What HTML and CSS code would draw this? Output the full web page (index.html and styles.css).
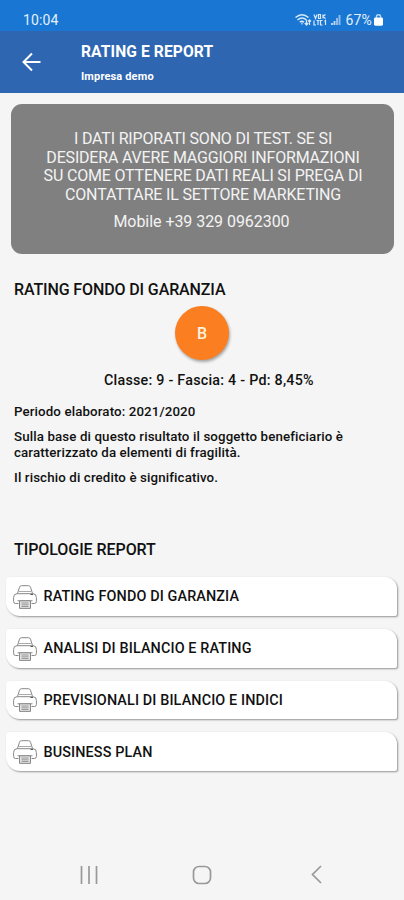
FILE: index.html
```
<!DOCTYPE html>
<html lang="it">
<head>
<meta charset="utf-8">
<title>Rating e Report</title>
<link rel="stylesheet" href="styles.css">
</head>
<body>
<svg class="defs" width="0" height="0" aria-hidden="true">
  <symbol id="printer" viewBox="0 0 24 24">
    <path d="M4.500 8.500 6.500 2.200Q7 .7 8.500.7h7Q17 .7 17.500 2.200l2 6.300" fill="none" stroke="#888"/>
    <path d="M6 6.500h12" stroke="#aaa" fill="none"/>
    <path d="M5.500 18.500H2.500Q.6 18.500.6 16.500v-4Q.6 8.700 4 8.700h16q3.400 0 3.400 3.800v4q0 2-1.900 2h-3" fill="none" stroke="#888"/>
    <path d="M17.500 9.500h2.500" stroke="#555"/>
    <path d="M4.500 15.800h15" stroke="#888"/>
    <path d="M6.500 15.800h11v7.600h-11z" fill="#e2e2e2" stroke="#888"/>
    <path d="M8.500 18h7M8.500 19.800h7M8.500 21.500h7" stroke="#888" stroke-width=".8"/>
  </symbol>
</svg>
<div class="status">
  <span class="time">10:04</span>
  <svg class="indicators" width="48" height="14" viewBox="0 0 48 14" fill="none" stroke="#d8e9fb" aria-hidden="true">
    <path d="M.5 4.500Q7-1 13.500 4.500M2.500 7Q7 3 11.500 7M4.800 9.200Q7 7.400 9 9.200" stroke-width="1.500"/>
    <path d="M7 9.500v2M11.500 7v5M9.800 10l1.700 2 1.700-2M14.500 12V7M13 8.500l1.500-1.700L16 8.500" stroke-width="1.200"/>
    <path d="M19 1.500l1.500 4 1.500-4M23.500 1.500h2v4h-2zM28 1.500v4M28 3.500l2.500-2M28 3.500l2.500 2" stroke-width="1.200"/>
    <path d="M19 7.500v4.500h2M21.500 7.500h3M23 7.500v4.500M27.500 7.500h-2V12h2M29.500 8.500l1-1V12" stroke-width="1.200"/>
    <path d="M37 12v-2M39.500 12V8" stroke-width="1.800" opacity=".9"/>
    <path d="M42 12V5M44.500 12V2" stroke-width="2" opacity=".6"/>
  </svg>
  <span class="percent">67%</span>
  <svg class="battery" width="9" height="12" viewBox="0 0 9 12" aria-hidden="true">
    <path d="M2.500 4V2.300Q2.500.8 4.500.8t2 1.500V4" fill="none" stroke="#b7d6f6" stroke-width="1.400"/>
    <rect y="3.500" width="9" height="8.200" rx="1.400" fill="#fff"/>
  </svg>
</div>
<header class="appbar">
  <svg class="back" width="20" height="20" viewBox="0 0 20 20" fill="none" stroke="#fff" stroke-width="2" aria-label="Indietro"><path d="M18.500 10H2M10 1.500 1.500 10l8.500 8.500"/></svg>
  <div class="titles">
    <h1>RATING E REPORT</h1>
    <p>Impresa demo</p>
  </div>
</header>
<main>
  <section class="notice">
    <p class="warning">I DATI RIPORATI SONO DI TEST. SE SI<br>DESIDERA AVERE MAGGIORI INFORMAZIONI<br>SU COME OTTENERE DATI REALI SI PREGA DI<br>CONTATTARE IL SETTORE MARKETING</p>
    <p class="mobile">Mobile +39 329 0962300</p>
  </section>
  <section class="rating">
    <h2>RATING FONDO DI GARANZIA</h2>
    <div class="grade">B</div>
    <p class="score">Classe: 9 - Fascia: 4 - Pd: 8,45%</p>
    <p class="detail">Periodo elaborato: 2021/2020</p>
    <p class="detail">Sulla base di questo risultato il soggetto beneficiario è<br>caratterizzato da elementi di fragilità.</p>
    <p class="detail">Il rischio di credito è significativo.</p>
  </section>
  <section class="reports">
    <h2 class="types">TIPOLOGIE REPORT</h2>
    <div class="list">
      <div class="report"><svg class="print"><use href="#printer"/></svg><span>RATING FONDO DI GARANZIA</span></div>
      <div class="report"><svg class="print"><use href="#printer"/></svg><span>ANALISI DI BILANCIO E RATING</span></div>
      <div class="report"><svg class="print"><use href="#printer"/></svg><span>PREVISIONALI DI BILANCIO E INDICI</span></div>
      <div class="report"><svg class="print"><use href="#printer"/></svg><span>BUSINESS PLAN</span></div>
    </div>
  </section>
</main>
<nav class="navbar">
  <svg width="18" height="18" viewBox="0 0 18 18" fill="none" stroke="#999" stroke-width="1.700"><path d="M1.500 0v18M9 0v18M16.500 0v18"/></svg>
  <svg class="home" width="20" height="20" viewBox="0 0 20 20" fill="none" stroke="#999" stroke-width="1.700"><rect x="1.500" y="1.500" width="17" height="17" rx="5.500"/></svg>
  <svg width="11" height="19" viewBox="0 0 11 19" fill="none" stroke="#999" stroke-width="1.700"><path d="M10 1 1.500 9.500 10 18"/></svg>
</nav>
</body>
</html>
```
FILE: styles.css
```
* { box-sizing: border-box; }
body {
  margin: 0;
  height: 900px;
  display: flex;
  flex-direction: column;
  overflow: hidden;
  background: #f5f5f5;
  color: #111;
  font-family: Roboto, "Liberation Sans", sans-serif;
}
h1, h2, p { margin: 0; white-space: nowrap; }
.defs { position: absolute; }
.status {
  height: 31px;
  flex: none;
  display: flex;
  align-items: center;
  padding: 9px 21px 0 23px;
  background: #1976d2;
  color: #e4f0fc;
  font-size: 14px;
}
.time { letter-spacing: .1px; }
.indicators { margin-left: auto; }
.percent { margin: 0 2px 0 2px; letter-spacing: .2px; }
.appbar {
  height: 62px;
  flex: none;
  display: flex;
  padding: 21px 0 0 22px;
  background: #2e66b1;
  color: #fff;
}
.titles { margin: -10px 0 0 39px; }
.appbar h1 { font-size: 15.600px; line-height: 20px; font-weight: 700; letter-spacing: .1px; }
.appbar p { margin-top: 7px; font-size: 11px; line-height: 16px; font-weight: 700; letter-spacing: .15px; }
.notice {
  height: 150px;
  margin: 11px 10px 0 11px;
  padding: 26px 0 0 1px;
  border-radius: 11px;
  background: #808080;
  color: #f3f3f3;
  text-align: center;
  font-size: 16px;
}
.warning { line-height: 18.500px; letter-spacing: -.18px; }
.mobile { margin-top: 9px; padding-right: 3px; line-height: 18px; letter-spacing: -.05px; }
.rating { height: 285px; padding: 26px 14px 0; font-weight: 500; }
h2 { font-size: 16px; line-height: 20px; font-weight: 500; letter-spacing: -.12px; }
.grade {
  width: 54px;
  height: 54px;
  margin: 6px auto 0;
  border-radius: 50%;
  background: #fb7e20;
  box-shadow: 1px 2px 3px #0005;
  color: #fff3df;
  text-align: center;
  font-size: 16px;
  line-height: 55px;
}
.score { margin: 11px 0 5px 90px; font-size: 14.300px; line-height: 18px; letter-spacing: .24px; }
.detail { margin-top: 9px; font-size: 13.300px; line-height: 16px; letter-spacing: .12px; }
.score + .detail { margin-top: 15px; }
.types { padding: 1px 14px 0; letter-spacing: -.06px; }
.list { display: grid; gap: 13px; margin: 17px 7px 0 6px; }
.report {
  height: 38.800px;
  display: flex;
  align-items: center;
  padding: 1px 0 0 7px;
  gap: 6.500px;
  border-radius: 4px 12px 2px 14px;
  background: #fff;
  box-shadow: 1px 1px 2px #0006;
  font-size: 14.400px;
  font-weight: 500;
  letter-spacing: .12px;
}
.print { width: 24px; height: 24px; flex: none; }
.navbar {
  margin-top: auto;
  height: 51px;
  flex: none;
  display: flex;
  align-items: center;
  justify-content: space-between;
  padding: 0 82px 0 80px;
}
.home { margin-right: 5px; }
```
